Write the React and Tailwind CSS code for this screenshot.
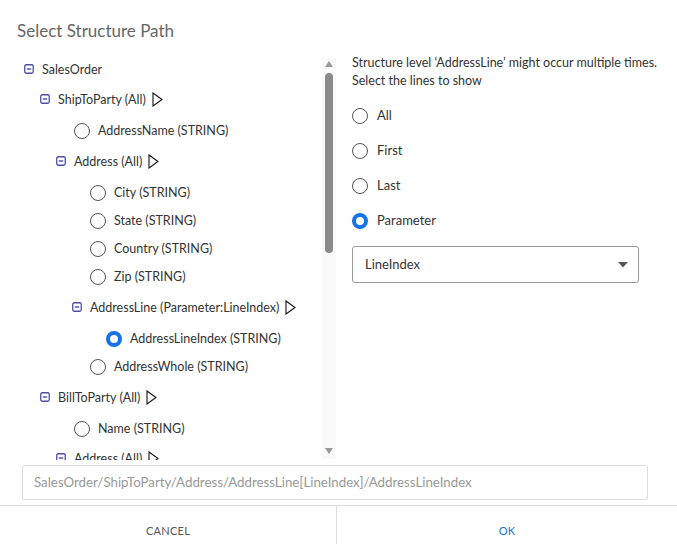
import React from 'react';

const FONT = { fontFamily: 'Lato, "Noto Sans", sans-serif' };

const MinusBox = () => (
  <svg width="10" height="10" viewBox="0 0 10 10" className="shrink-0 -mt-[3px]">
    <rect x="0.75" y="0.75" width="8.5" height="8.5" rx="1.5" fill="#fff" stroke="#4a4fa3" strokeWidth="1.3" />
    <line x1="2.8" y1="5" x2="7.2" y2="5" stroke="#4a4fa3" strokeWidth="1.4" />
  </svg>
);

const Tri = () => (
  <svg width="11" height="15" viewBox="0 0 11 15" className="shrink-0 ml-[6px] -mt-[2px]">
    <path d="M1 1 L10 7.5 L1 14 Z" fill="none" stroke="#111" strokeWidth="1.1" strokeLinejoin="miter" />
  </svg>
);

const Radio = ({ on }) =>
  on ? (
    <span className="w-[16px] h-[16px] rounded-full border-[4px] border-[#1473e6] bg-white shrink-0 box-border" />
  ) : (
    <span className="w-[16px] h-[16px] rounded-full border-[1.5px] border-[#555] bg-white shrink-0 box-border" />
  );

// x = left edge of icon / radio, mt = extra top gap
const rows = [
  { x: 24, t: 'SalesOrder', head: true, mt: 1 },
  { x: 40, t: 'ShipToParty (All)', head: true, tri: true, mt: 2 },
  { x: 74, t: 'AddressName (STRING)', mt: 3 },
  { x: 56, t: 'Address (All)', head: true, tri: true, mt: 3 },
  { x: 90, t: 'City (STRING)', mt: 3 },
  { x: 90, t: 'State (STRING)', mt: 0 },
  { x: 90, t: 'Country (STRING)', mt: 0 },
  { x: 90, t: 'Zip (STRING)', mt: 0 },
  { x: 72, t: 'AddressLine (Parameter:LineIndex)', head: true, tri: true, mt: 3 },
  { x: 106, t: 'AddressLineIndex (STRING)', on: true, mt: 3 },
  { x: 90, t: 'AddressWhole (STRING)', mt: 0 },
  { x: 40, t: 'BillToParty (All)', head: true, tri: true, mt: 3 },
  { x: 74, t: 'Name (STRING)', mt: 3 },
  { x: 56, t: 'Address (All)', head: true, tri: true, mt: 2 },
];

const TreeRow = ({ r }) => (
  <div
    className="h-[28px] flex items-center text-[12.5px] text-[#333] whitespace-nowrap"
    style={{ paddingLeft: r.x, marginTop: r.mt }}
  >
    {r.head ? <MinusBox /> : <Radio on={r.on} />}
    <span className="ml-[8px]">{r.t}</span>
    {r.tri && <Tri />}
  </div>
);

const Option = ({ label, on }) => (
  <div className="h-[35px] flex items-center gap-[9px] text-[13px] text-[#333]">
    <Radio on={on} />
    <span>{label}</span>
  </div>
);

export default function App() {
  return (
    <div className="w-[677px] h-[544px] bg-white flex flex-col overflow-hidden" style={FONT}>
      {/* Title */}
      <div className="h-[55px] pl-[17px] pt-[19px] text-[17px] text-[#666] leading-[24px]">
        Select Structure Path
      </div>

      <div className="flex h-[405px]">
        {/* Tree */}
        <div className="w-[322px] overflow-hidden">
          {rows.map((r, i) => (
            <TreeRow key={i} r={r} />
          ))}
        </div>

        {/* Scrollbar */}
        <div className="w-[14px] h-[401px] mt-[3px] bg-[#f9f9f9] flex flex-col items-center">
          <svg width="8" height="7" viewBox="0 0 8 7" className="mt-[3px]">
            <path d="M0 6 L4 0 L8 6 Z" fill="#999" />
          </svg>
          <div className="w-[8px] h-[180px] mt-[5px] rounded-full bg-[#8a8a8a]" />
          <div className="flex-1" />
          <svg width="8" height="7" viewBox="0 0 8 7" className="mb-[4px]">
            <path d="M0 0 L8 0 L4 6 Z" fill="#999" />
          </svg>
        </div>

        {/* Right panel */}
        <div className="flex-1 pl-[16px] pr-[10px]">
          <p className="text-[12.5px] leading-[18px] text-[#333] mt-[-1px]">
            Structure level ‘AddressLine’ might occur multiple times.
            <br />
            Select the lines to show
          </p>
          <div className="mt-[8px]">
            <Option label="All" />
            <Option label="First" />
            <Option label="Last" />
            <Option label="Parameter" on />
          </div>
          <div className="mt-[8px] w-[287px] h-[37px] border border-[#999] rounded-[3px] flex items-center justify-between pl-[12px] pr-[10px] text-[13px] text-[#333]">
            <span>LineIndex</span>
            <svg width="10" height="6" viewBox="0 0 10 6">
              <path d="M0 0 L10 0 L5 5.5 Z" fill="#555" />
            </svg>
          </div>
        </div>
      </div>

      {/* Path */}
      <div className="pl-[22px] pr-[29px] pt-[5px]">
        <div className="h-[35px] border border-[#ddd] rounded-[2px] flex items-center pl-[11px] text-[13.3px] text-[#999] whitespace-nowrap">
          SalesOrder/ShipToParty/Address/AddressLine[LineIndex]/AddressLineIndex
        </div>
      </div>

      {/* Footer */}
      <div className="mt-[5px] flex-1 border-t border-[#ddd] flex">
        <button className="w-[337px] border-r border-[#ddd] pt-[13px] text-[11px] tracking-wide text-[#555] uppercase">
          Cancel
        </button>
        <button className="flex-1 pt-[13px] text-[11px] tracking-wide text-[#1473e6] uppercase">Ok</button>
      </div>
    </div>
  );
}
